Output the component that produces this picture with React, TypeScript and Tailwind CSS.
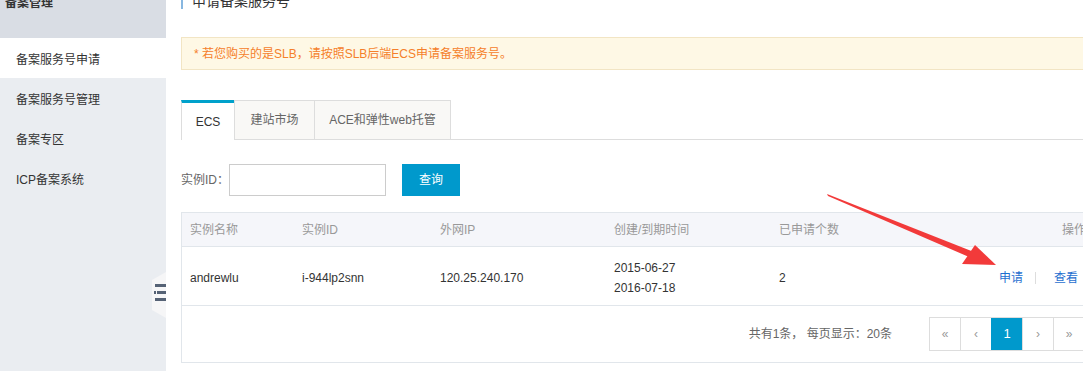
import React from 'react'

const font = 'font-["Liberation_Sans","Noto_Sans_CJK_SC",sans-serif]'

const navItems = ['备案服务号申请', '备案服务号管理', '备案专区', 'ICP备案系统']

function Sidebar() {
  return (
    <aside className="relative w-[166px] shrink-0 bg-[#eaedf1]">
      <div className="h-[52px] bg-[#d9dde4] pl-[5px] pt-[10px] text-[12px] leading-[14px] font-bold text-[#333]">
        备案管理
      </div>
      {navItems.map((item, i) => (
        <div
          key={item}
          className={`h-[40px] flex items-center pl-[16px] pt-[3px] text-[12px] text-[#333] ${i === 0 ? 'bg-white' : ''}`}
        >
          {item}
        </div>
      ))}
      <div className="h-[400px]" />
      {/* collapse toggle */}
      <div className="absolute right-0 top-[286px] w-[14px] h-[46px]">
        <svg width="14" height="46" viewBox="0 0 14 46">
          <polygon points="14,0 14,46 0,38 0,8" fill="#f6f6f7" />
          <rect x="3" y="12" width="11" height="3" fill="#556275" />
          <rect x="5" y="19" width="9" height="3" fill="#556275" />
          <rect x="2" y="19" width="2" height="3" fill="#556275" />
          <rect x="3" y="26" width="11" height="3" fill="#556275" />
        </svg>
      </div>
    </aside>
  )
}

function Tabs() {
  return (
    <div className="flex h-[40px] border-b border-[#dddddd]">
      <div className="w-[53px] h-[40px] bg-white border-t-[3px] border-t-[#00a1cb] border-l border-l-[#dddddd] flex items-center justify-center text-[12px] text-[#333] -mb-px">
        ECS
      </div>
      <div className="w-[81px] bg-[#f9f8f6] border border-[#dddddd] border-b-0 flex items-center justify-center text-[12px] text-[#666]">
        建站市场
      </div>
      <div className="w-[136px] bg-[#f9f8f6] border border-l-0 border-[#dddddd] border-b-0 flex items-center justify-center text-[12px] text-[#666]">
        ACE和弹性web托管
      </div>
    </div>
  )
}

function Pager() {
  const btns = ['«', '‹', '1', '›', '»']
  return (
    <div className="flex items-center justify-end h-[57px] pr-[16px] border-b border-[#e1e6eb]">
      <span className="text-[12px] text-[#666] mr-[37px]">共有1条， 每页显示：20条</span>
      <div className="flex border border-[#dddddd] border-l-0">
        {btns.map((b) => (
          <div
            key={b}
            className={`w-[31px] h-[32px] border-l border-[#dddddd] flex items-center justify-center text-[12px] ${
              b === '1' ? 'bg-[#0099cc] text-white border-l-[#0099cc] text-[13px]' : 'text-[#999]'
            }`}
          >
            {b}
          </div>
        ))}
      </div>
    </div>
  )
}

function InstanceTable() {
  const cols = ['w-[120px]', 'w-[138px]', 'w-[174px]', 'w-[165px]', 'w-[190px]']
  return (
    <div className="w-[920px] border-l border-[#e1e6eb]">
      <div className="flex h-[35px] items-center bg-[#f5f6fa] border-y border-[#e1e6eb] text-[12px] text-[#999]">
        <div className={`${cols[0]} pl-[8px]`}>实例名称</div>
        <div className={cols[1]}>实例ID</div>
        <div className={cols[2]}>外网IP</div>
        <div className={cols[3]}>创建/到期时间</div>
        <div className={cols[4]}>已申请个数</div>
        <div className="flex-1 text-right pr-[15px]">操作</div>
      </div>
      <div className="flex h-[59px] items-center pt-[3px] border-b border-[#e1e6eb] text-[12px] text-[#333]">
        <div className={`${cols[0]} pl-[8px]`}>andrewlu</div>
        <div className={cols[1]}>i-944lp2snn</div>
        <div className={cols[2]}>120.25.240.170</div>
        <div className={`${cols[3]} leading-[20px]`}>
          <div>2015-06-27</div>
          <div>2016-07-18</div>
        </div>
        <div className={cols[4]}>2</div>
        <div className="flex-1 flex items-center pl-[30px] text-[#1f6fcf]">
          <span>申请</span>
          <span className="mx-[12px] w-px h-[12px] bg-[#dddddd]" />
          <span className="ml-[6px]">查看</span>
        </div>
      </div>
      <Pager />
    </div>
  )
}

export default function App() {
  return (
    <div className={`relative w-[1083px] h-[371px] overflow-hidden bg-white ${font}`}>
      <div className="flex -mt-[14px]">
        <Sidebar />
        <main className="flex-1 pl-[15px] pt-[7px]">
          <h1 className="h-[16px] border-l-2 border-[#88b7e0] pl-[9px] text-[14px] leading-[16px] text-[#333]">
            申请备案服务号
          </h1>
          <div className="mt-[28px] h-[33px] flex items-center bg-[#fef8e5] border border-[#f2e5c4] pl-[12px] text-[12px] text-[#f5802a]">
            * 若您购买的是SLB，请按照SLB后端ECS申请备案服务号。
          </div>
          <div className="mt-[30px]">
            <Tabs />
          </div>
          <div className="mt-[24px] flex items-center h-[32px]">
            <span className="text-[12px] text-[#666]">实例ID：</span>
            <input className="w-[157px] h-[32px] border border-[#cccccc] outline-none" />
            <button className="ml-[16px] w-[58px] h-[32px] bg-[#0099cc] text-white text-[12px]">查询</button>
          </div>
          <div className="mt-[16px]">
            <InstanceTable />
          </div>
        </main>
      </div>
      {/* annotation arrow */}
      <svg className="absolute left-0 top-0 pointer-events-none" width="1083" height="371">
        <polygon points="827,194 828,196 976,260 979,254" fill="#f23a3a" />
        <polygon points="996,265 962,264 975,245" fill="#f23a3a" />
      </svg>
    </div>
  )
}
